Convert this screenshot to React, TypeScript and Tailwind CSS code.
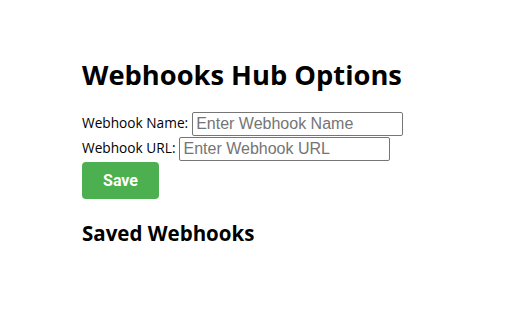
export default function App() {
  return (
    <div className="w-[512px] h-[320px] bg-white pl-[82px] pt-[58px]" style={{ fontFamily: "'Open Sans', sans-serif" }}>
      <h1 className="text-[27.3px] leading-[34px] font-bold text-black">Webhooks Hub Options</h1>
      <div className="mt-[19px] flex flex-col">
        <div className="flex items-center h-[25px]">
          <label className="text-[13.7px] text-black mr-[4px]">Webhook Name:</label>
          <input
            className="w-[211px] h-[24px] border border-[#767676] rounded-[2px] px-[3px] text-[16px] placeholder:text-[#757575] outline-none"
            style={{ fontFamily: "'Liberation Sans', Arial, sans-serif" }}
            placeholder="Enter Webhook Name"
          />
        </div>
        <div className="flex items-center h-[25px]">
          <label className="text-[13.7px] text-black mr-[4px]">Webhook URL:</label>
          <input
            className="w-[211px] h-[24px] border border-[#767676] rounded-[2px] px-[3px] text-[16px] placeholder:text-[#757575] outline-none"
            style={{ fontFamily: "'Liberation Sans', Arial, sans-serif" }}
            placeholder="Enter Webhook URL"
          />
        </div>
      </div>
      <button
        className="mt-[1px] w-[77px] h-[37px] bg-[#4caf50] text-white rounded-[4px] text-[16px] font-bold"
        style={{ fontFamily: "Roboto, sans-serif" }}
      >
        Save
      </button>
      <h2 className="mt-[22px] text-[20.5px] leading-[24px] font-bold text-black">Saved Webhooks</h2>
    </div>
  );
}
